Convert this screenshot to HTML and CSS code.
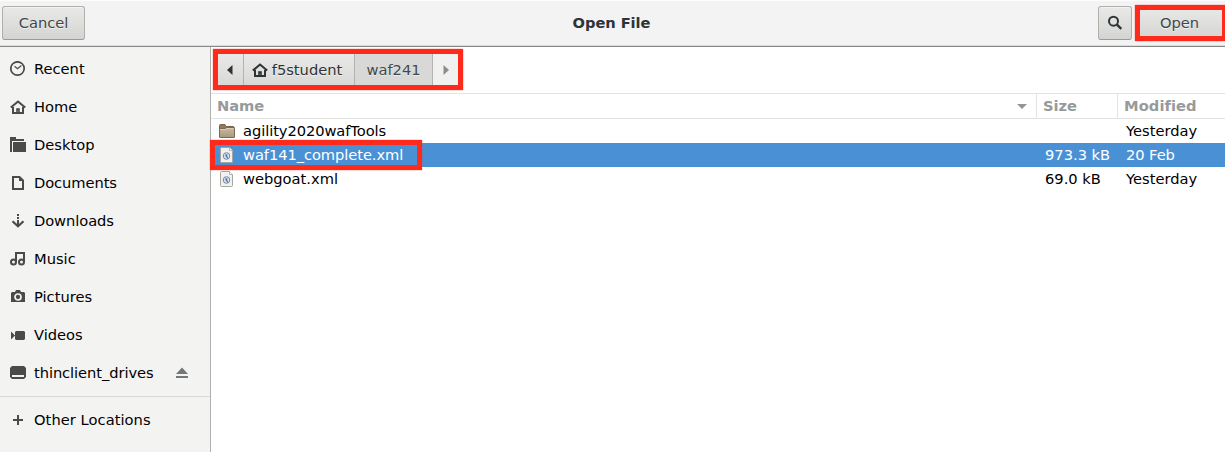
FILE: index.html
```html
<!DOCTYPE html>
<html lang="en">
<head>
<meta charset="utf-8">
<title>Open File</title>
<link rel="stylesheet" href="styles.css">
</head>
<body>
<svg class="defs" width="0" height="0">
  <symbol id="home" viewBox="0 0 16 16"><path d="M.8 8.600 8 2.500l7.200 6.100" fill="none" stroke="currentColor" stroke-width="2"/><path d="M3 8v6h10V8" fill="none" stroke="currentColor" stroke-width="2"/><path d="M6.500 9.500h3V14h-1v-2.500h-1V14h-1z" fill="currentColor" stroke="currentColor" stroke-width=".6"/></symbol>
  <symbol id="xml" viewBox="0 0 16 16"><path d="M1.500 1.500q0-1 1-1h8l3 3v11q0 1-1 1h-10q-1 0-1-1z" fill="#f1f1ef" stroke="#a4a6a2"/><path d="M10.500.5v3h3" fill="#fff" stroke="#b4b5b2"/><circle cx="7.500" cy="9" r="3.300" fill="#dbe3ec" stroke="#6f88aa"/><path d="M6 7.500h2.500v1L7.500 9l1.500 1v1.500L7 10z" fill="#4d6c99"/></symbol>
  <linearGradient id="folder" x1="0" y1="0" x2="0" y2="1"><stop offset="0" stop-color="#c9b9a1"/><stop offset="1" stop-color="#a8987f"/></linearGradient>
</svg>
<div class="dialog">
  <header class="titlebar">
    <button class="btn cancel">Cancel</button>
    <h1 class="title">Open File</h1>
    <div class="actions">
      <button class="btn search"><svg width="16" height="16" viewBox="0 0 16 16"><circle cx="6.500" cy="6.200" r="4.500" fill="none" stroke="#2e3436" stroke-width="2"/><path d="m9.700 9.400 4.600 4.500" stroke="#2e3436" stroke-width="2.400"/></svg></button>
      <button class="btn open">Open</button>
    </div>
    <div class="mark mark-open"></div>
  </header>
  <div class="content">
    <nav class="sidebar">
      <div class="place"><svg class="icon" viewBox="0 0 16 16"><circle cx="7.500" cy="7.500" r="6.700" fill="none" stroke="currentColor" stroke-width="1.700"/><path d="m4.600 5.300 2.900 2.500 3.900-3.300" fill="none" stroke="currentColor" stroke-width="1.200"/></svg>Recent</div>
      <div class="place"><svg class="icon"><use href="#home"/></svg>Home</div>
      <div class="place"><svg class="icon" viewBox="0 0 16 16"><path d="M0 0h6v2h8v2H2v11H0zM3 5h13v10H3z" fill="currentColor"/></svg>Desktop</div>
      <div class="place tight"><svg class="icon" viewBox="0 0 16 16"><path d="M3 2h6.500L13 5.500V14H3z" fill="none" stroke="currentColor" stroke-width="2"/><path d="M9 1v5h5z" fill="currentColor"/></svg>Documents</div>
      <div class="place tight"><svg class="icon" viewBox="0 0 16 16"><path d="M7 1h2v2H7zM7 4h2v2H7zM7 7h2v5H7z" fill="currentColor"/><path d="m2.500 8.300 5.500 5 5.500-5" fill="none" stroke="currentColor" stroke-width="2.200"/></svg>Downloads</div>
      <div class="place"><svg class="icon" viewBox="0 0 16 16"><path d="M6 11V2h8v8.500" fill="none" stroke="currentColor" stroke-width="2"/><circle cx="3.500" cy="11" r="2.500" fill="none" stroke="currentColor" stroke-width="2"/><circle cx="11.500" cy="11" r="2.500" fill="none" stroke="currentColor" stroke-width="2"/></svg>Music</div>
      <div class="place"><svg class="icon" viewBox="0 0 16 16"><path d="M2 3h3l1-2h4l1 2h3l1 1v9H1V4z" fill="currentColor"/><circle cx="8" cy="8" r="3" fill="none" stroke="#f3f3f2" stroke-width="1.700"/></svg>Pictures</div>
      <div class="place"><svg class="icon" viewBox="0 0 16 16"><path d="M6 4h8l1 1v7l-1 1H6l-1-1V5zM1 4.500l4 4-4 4z" fill="currentColor"/></svg>Videos</div>
      <div class="place tight"><svg class="icon" viewBox="0 0 16 16"><path d="M2 1h12l2 2v9l-2 2H2l-2-2V3z" fill="currentColor"/><path d="M2 10h12v2H2z" fill="#f3f3f2"/></svg><span class="label">thinclient_drives</span><svg class="eject" viewBox="0 0 12 12"><path d="M0 7 6 .5 12 7zM0 9h12v2H0z" fill="#70787a"/></svg></div>
      <div class="place other"><svg class="icon" viewBox="0 0 16 16"><path d="M7 3h2v4h4v2H9v4H7V9H3V7h4z" fill="currentColor"/></svg>Other Locations</div>
    </nav>
    <main class="browser">
      <div class="pathbar">
        <div class="crumbs">
          <div class="crumb back"><svg width="6" height="10" viewBox="0 0 6 10"><path d="M5.500 0v10L0 5z" fill="#2e3436"/></svg></div>
          <div class="crumb user"><svg width="16" height="16"><use href="#home"/></svg>f5student</div>
          <div class="crumb current">waf241</div>
          <div class="crumb next"><svg width="6" height="10" viewBox="0 0 6 10"><path d="M.5 0v10L6 5z" fill="#8b8e8f"/></svg></div>
        </div>
        <div class="mark mark-path"></div>
      </div>
      <div class="grid head">
        <div class="cell name">Name<svg class="sort" width="10" height="5" viewBox="0 0 10 5"><path d="M0 0h10L5 5z" fill="#929595"/></svg></div>
        <div class="cell">Size</div>
        <div class="cell">Modified</div>
      </div>
      <div class="grid row">
        <div class="cell tight"><svg class="file" viewBox="0 0 16 16"><path d="M.5 14V2.500q0-1 1-1H6l1 2h7.500V6" fill="#8f7a5c" stroke="#7a6548"/><path d="M.5 14V5.500h5.500l1.500-1h8V14q0 .5-.5.500H1Q.5 14.500.5 14z" fill="url(#folder)" stroke="#7c6a50"/><path d="M1.500 6.500h5l1.500-1h6.500" fill="none" stroke="#dccfb9"/></svg>agility2020wafTools</div>
        <div class="cell"></div>
        <div class="cell">Yesterday</div>
      </div>
      <div class="grid row selected">
        <div class="cell tight"><svg class="file"><use href="#xml"/></svg>waf141_complete.xml</div>
        <div class="cell">973.3 kB</div>
        <div class="cell tight">20 Feb</div>
        <div class="mark mark-file"></div>
      </div>
      <div class="grid row">
        <div class="cell"><svg class="file"><use href="#xml"/></svg>webgoat.xml</div>
        <div class="cell">69.0 kB</div>
        <div class="cell">Yesterday</div>
      </div>
    </main>
  </div>
</div>
</body>
</html>
```
FILE: styles.css
```css
* { box-sizing: border-box; }
body { margin: 0; background: #fff; overflow: hidden; }
.defs { display: block; }
.dialog {
  width: 1225px;
  height: 452px;
  display: flex;
  flex-direction: column;
  overflow: hidden;
  font: 14.667px/20px "DejaVu Sans", sans-serif;
  font-variant-ligatures: none;
  color: #000;
}
svg { flex: none; }
.tight { letter-spacing: -.07px; }

.titlebar {
  position: relative;
  height: 47px;
  display: grid;
  grid-template-columns: 1fr auto 1fr;
  align-items: start;
  padding: 5px 4px 0 2px;
  background: #f3f3f3;
  border-top: 1px solid #fcfcfc;
  border-bottom: 1px solid #868885;
  box-shadow: inset 0 -1px #dcdcda;
}
.title {
  margin: 0;
  padding-top: 7px;
  font-size: 14.667px;
  line-height: 20px;
  letter-spacing: -.07px;
  color: #2e3436;
}
.actions { display: flex; justify-content: flex-end; gap: 6px; margin-right: -4px; }
.btn {
  height: 34px;
  padding: 0;
  display: flex;
  align-items: center;
  justify-content: center;
  font: inherit;
  color: #42484a;
  text-shadow: 0 1px #fff9;
  border: 1px solid #aeb0ac;
  border-bottom-color: #999b97;
  border-radius: 3px;
  background: linear-gradient(#e9e9e8, #d4d4d2);
  box-shadow: inset 0 1px #f2f2f1;
}
.cancel { width: 83px; }
.search { width: 34px; }
.open { width: 87px; padding-right: 4px; }

.content { flex: 1; display: flex; min-height: 0; }
.sidebar {
  width: 211px;
  padding-top: 3px;
  background: #f3f3f2;
  border-right: 1px solid #aeb0ad;
}
.place {
  height: 38px;
  display: flex;
  align-items: center;
  gap: 8px;
  padding-left: 10px;
}
.icon { width: 16px; height: 16px; color: #4a4a48; }
.label { flex: 1; }
.eject { width: 12px; height: 12px; margin-right: 22px; }
.other {
  height: 47px;
  margin-top: 4px;
  border-top: 1px solid #d8d8d6;
  letter-spacing: .05px;
}

.browser { flex: 1; min-width: 0; }
.pathbar {
  position: relative;
  height: 47px;
  padding: 6px 0 0 6px;
  border-bottom: 1px solid #e3e3e2;
}
.crumbs {
  width: 243px;
  height: 34px;
  display: flex;
  border: 1px solid #b6b8b4;
  border-radius: 3px;
  color: #42484a;
}
.crumb {
  display: flex;
  align-items: center;
  justify-content: center;
  border-right: 1px solid #b2b4b1;
  background: linear-gradient(#e9e9e8, #d8d8d6);
  text-shadow: 0 1px #fff8;
}
.back { width: 26px; padding-right: 2px; }
.user { width: 111px; gap: 4px; padding-right: 4px; color: #2e3436; }
.current { width: 78px; background: #d8d8d6; }
.next { flex: 1; padding-right: 1px; border-right: 0; background: #f1f1f0; }

.grid {
  position: relative;
  height: 24px;
  display: grid;
  grid-template-columns: 826px 81px 1fr;
}
.cell { display: flex; align-items: center; padding-left: 8px; white-space: nowrap; }
.head { height: 25px; border-bottom: 1px solid #e3e3e2; font-weight: bold; color: #979a9a; }
.head .cell { padding-left: 6px; border-right: 1px solid #e3e3e2; }
.head .cell:last-child { border-right: 0; letter-spacing: .08px; }
.head .name { justify-content: space-between; padding-right: 9px; letter-spacing: -.07px; }
.file { width: 16px; height: 16px; margin-right: 8px; }
.selected { background: #4a90d4; color: #fff; }

.mark { position: absolute; border: 5px solid #fe2a1c; box-shadow: 0 0 1px #fe2a1c; }
.mark-open { left: 1135px; top: 4px; width: 92px; height: 36px; }
.mark-path { left: 2px; top: 2px; width: 250px; height: 41px; }
.mark-file { left: -1px; top: -3px; width: 212px; height: 30px; z-index: 1; }
```
